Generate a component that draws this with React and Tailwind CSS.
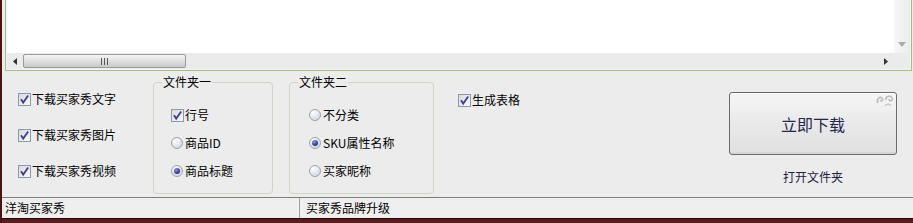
import React from 'react';

const CheckBox = () => (
  <svg width="13" height="13" viewBox="0 0 13 13" className="shrink-0">
    <defs>
      <linearGradient id="cbg" x1="0" y1="0" x2="1" y2="1">
        <stop offset="0" stopColor="#d6d8dc" />
        <stop offset="1" stopColor="#fbfbfb" />
      </linearGradient>
    </defs>
    <rect x="0.5" y="0.5" width="12" height="12" fill="url(#cbg)" stroke="#8d97ad" />
    <path d="M3 6.2 L5.2 9.6 L10.2 2.6" fill="none" stroke="#3b3f94" strokeWidth="1.8" />
  </svg>
);

const Radio = ({ on }) => (
  <svg width="12" height="12" viewBox="0 0 12 12" className="shrink-0">
    <defs>
      <radialGradient id="rbg" cx="0.35" cy="0.3" r="0.8">
        <stop offset="0" stopColor="#ffffff" />
        <stop offset="1" stopColor="#cdd3dd" />
      </radialGradient>
      <radialGradient id="rdot" cx="0.35" cy="0.3" r="0.8">
        <stop offset="0" stopColor="#8a96e0" />
        <stop offset="1" stopColor="#141f6e" />
      </radialGradient>
    </defs>
    <circle cx="6" cy="6" r="5.5" fill="url(#rbg)" stroke="#9ba3b0" />
    {on && <circle cx="6" cy="6" r="3" fill="url(#rdot)" />}
  </svg>
);

const Check = ({ label }) => (
  <div className="flex items-center h-[16px] gap-[1px]">
    <CheckBox />
    <span>{label}</span>
  </div>
);

const Opt = ({ label, on }) => (
  <div className="flex items-center h-[16px] gap-[2px]">
    <Radio on={on} />
    <span>{label}</span>
  </div>
);

const Group = ({ title, className, children }) => (
  <div className={`relative mt-[11px] h-[112px] border border-[#d3d3c4] rounded-[4px] ${className}`}>
    <span className="absolute -top-[8px] left-[8px] px-[1px] bg-[#ececec] leading-[14px]">{title}</span>
    <div className="flex flex-col gap-[12px] pt-[24px]">{children}</div>
  </div>
);

export default function App() {
  return (
    <div
      className="w-[913px] h-[223px] bg-[#ececec] border-l-2 border-[#4a1313] flex flex-col text-[12px] text-black overflow-hidden"
      style={{ fontFamily: '"Noto Sans CJK SC", "Liberation Sans", sans-serif' }}
    >
      {/* list box */}
      <div className="h-[71px] ml-[3px] mr-[1px] border-x border-b border-[#a3bf7b] bg-[#f3f3f3] px-[1px] pb-[1px] flex flex-col">
        <div className="flex-1 flex">
          <div className="flex-1 bg-white" />
          <div className="w-[16px] bg-gradient-to-r from-[#f7f7f7] to-[#ececec] flex items-end justify-center pb-[6px]">
            <svg width="8" height="5" viewBox="0 0 8 5">
              <path d="M0 0 H8 L4 5 Z" fill="#a9a9a9" />
            </svg>
          </div>
        </div>
        <div className="h-[16px] flex bg-[#ebebeb]">
          <div className="flex-1 flex items-center">
            <div className="w-[16px] flex justify-center">
              <svg width="4" height="7" viewBox="0 0 4 7">
                <path d="M4 0 V7 L0 3.5 Z" fill="#333" />
              </svg>
            </div>
            <div className="w-[163px] h-[14px] rounded-[2px] border border-[#9a9a9a] bg-gradient-to-b from-[#f6f6f6] via-[#e0e0e0] to-[#c8c8c8] flex items-center justify-center gap-[2px]">
              <span className="w-px h-[7px] bg-[#555]" />
              <span className="w-px h-[7px] bg-[#555]" />
              <span className="w-px h-[7px] bg-[#555]" />
            </div>
            <div className="flex-1" />
            <div className="w-[16px] flex justify-center">
              <svg width="4" height="7" viewBox="0 0 4 7">
                <path d="M0 0 V7 L4 3.5 Z" fill="#333" />
              </svg>
            </div>
          </div>
          <div className="w-[16px] bg-[#ebebeb]" />
        </div>
      </div>

      {/* options */}
      <div className="flex-1 flex items-start pl-[16px] pr-[16px]">
        <div className="w-[135px] mt-[20px] flex flex-col gap-[20px]">
          <Check label="下载买家秀文字" />
          <Check label="下载买家秀图片" />
          <Check label="下载买家秀视频" />
        </div>

        <Group title="文件夹一" className="w-[120px] pl-[17px]">
          <Check label="行号" />
          <Opt label="商品ID" />
          <Opt label="商品标题" on />
        </Group>

        <Group title="文件夹二" className="w-[145px] ml-[16px] pl-[19px]">
          <Opt label="不分类" />
          <Opt label="SKU属性名称" on />
          <Opt label="买家昵称" />
        </Group>

        <div className="ml-[24px] mt-[21px]">
          <Check label="生成表格" />
        </div>

        <div className="ml-auto mt-[21px] w-[168px] flex flex-col items-center">
          <button className="relative w-[168px] h-[63px] rounded-[3px] border border-[#6a6a6a] bg-gradient-to-b from-[#f6f6f6] via-[#e9e9e9] to-[#e0e0e0] shadow-[inset_0_1px_0_#ffffff,inset_0_-2px_0_#d6d6d6] text-[16px] text-[#26264f]">
            立即下载
            <svg width="20" height="14" viewBox="0 0 20 14" className="absolute top-[1px] right-[1px]">
              <path d="M3 9 C1 6 4 2 7 4 C9 6 6 8 5 6" fill="none" stroke="#bdbdbd" strokeWidth="1.6" />
              <path d="M11 6 C10 2 16 1 17 4 C18 7 14 8 14 5" fill="none" stroke="#bdbdbd" strokeWidth="1.6" />
              <path d="M10 12 C12 9 16 10 15 12" fill="none" stroke="#c6c6c6" strokeWidth="1.4" />
            </svg>
          </button>
          <span className="mt-[15px] leading-[14px] text-[#202040]">打开文件夹</span>
        </div>
      </div>

      {/* status bar */}
      <div className="h-[21px] border-t border-[#7d7d7d] bg-[#f0efef] flex items-center">
        <div className="w-[298px] h-full pl-[3px] flex items-center border-r border-[#a0a0a0]">洋淘买家秀</div>
        <div className="pl-[6px]">买家秀品牌升级</div>
      </div>
      <div className="h-[5px] bg-[#5a1d1d] border-t border-[#2e0808]" />
    </div>
  );
}
